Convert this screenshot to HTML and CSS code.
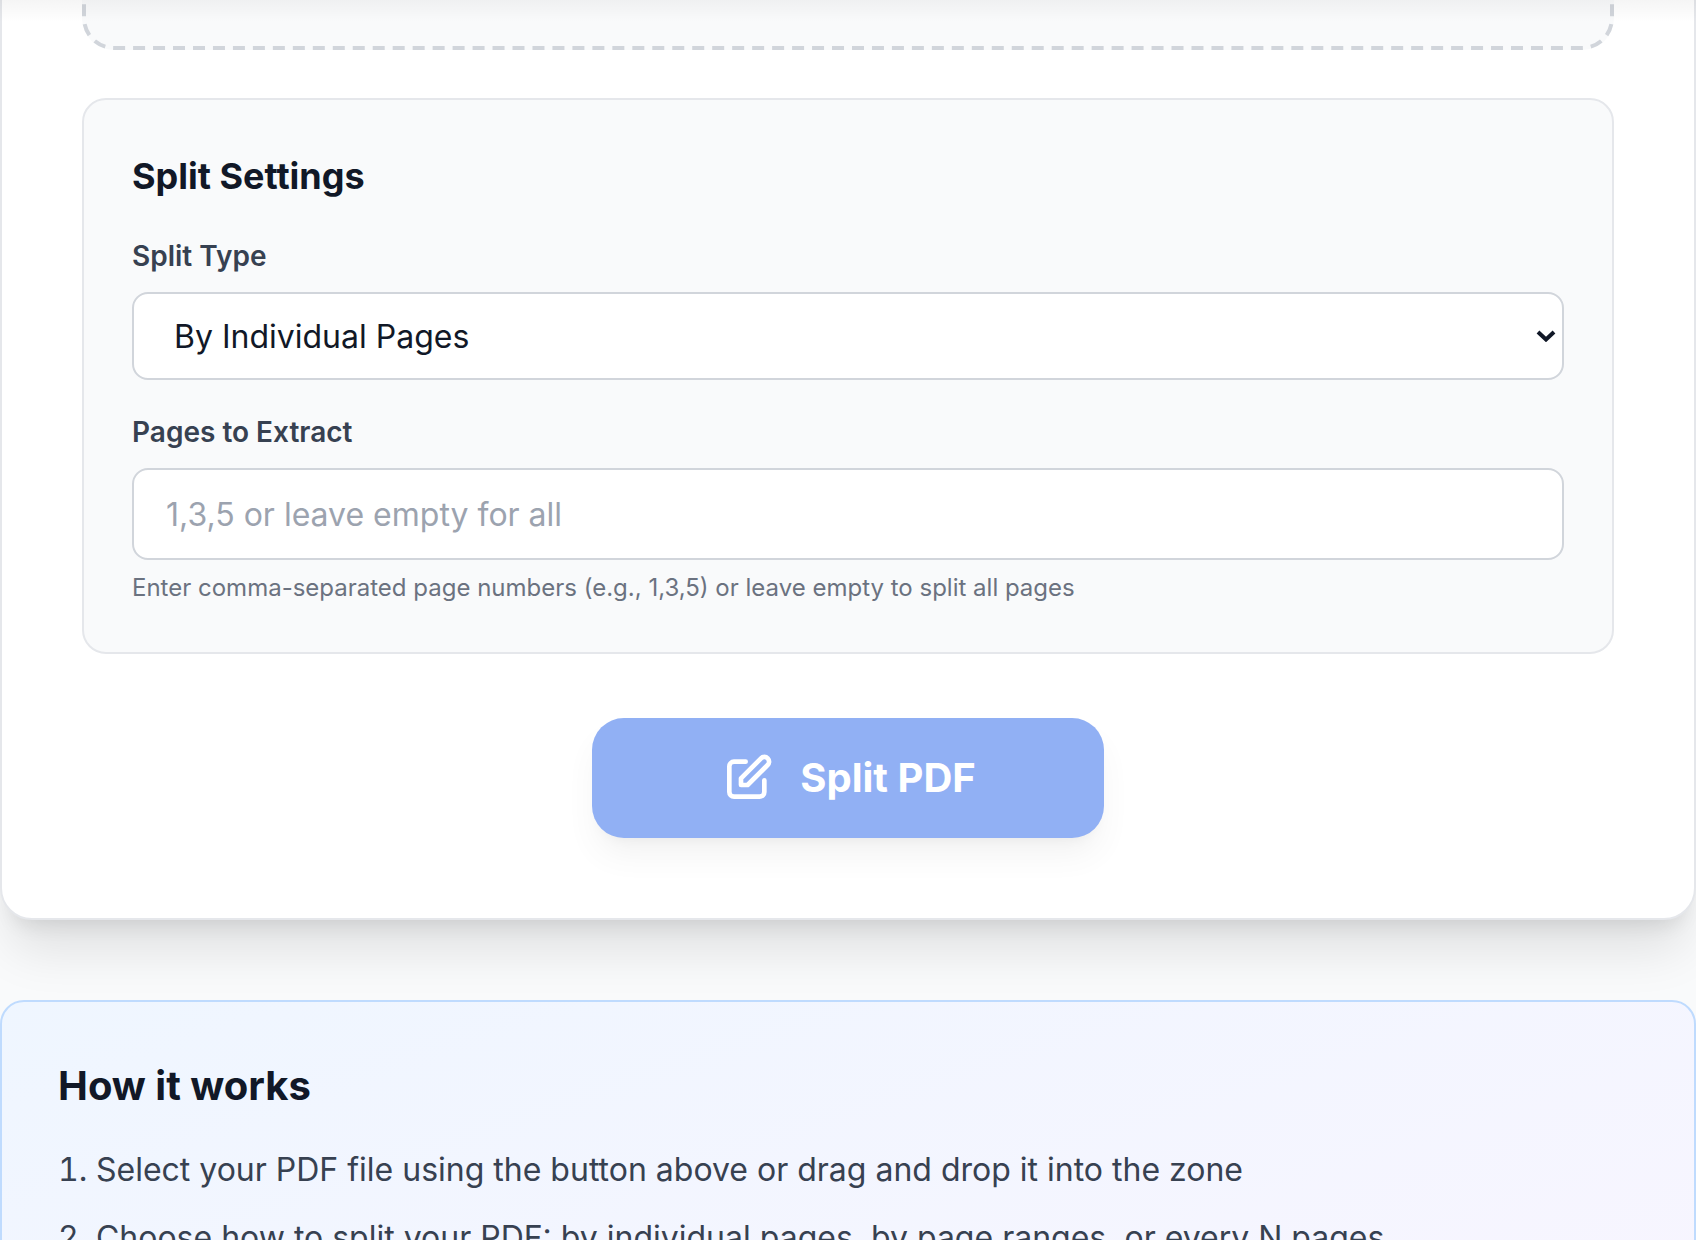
FILE: index.html
```html
<!DOCTYPE html>
<html lang="en">
<head>
    <meta charset="UTF-8">
    <meta name="viewport" content="width=device-width, initial-scale=1.0">
    <title>Split PDF</title>
    <link rel="stylesheet" href="styles.css">
</head>
<body>
    <main class="page">
        <section class="card">
            <div class="dropzone">
                <svg class="dropzone-outline" aria-hidden="true">
                    <rect x="2" y="2" rx="30" ry="30"/>
                </svg>
            </div>

            <form class="settings" id="split-form">
                <h3 class="settings-title">Split Settings</h3>

                <div class="field">
                    <label for="split-type">Split Type</label>
                    <div class="select-wrap">
                        <select id="split-type">
                            <option>By Individual Pages</option>
                        </select>
                        <svg class="select-arrow" viewBox="0 0 20 12" aria-hidden="true">
                            <path d="M2 2l8 7.500l8-7.500" fill="none" stroke="currentColor" stroke-width="4"/>
                        </svg>
                    </div>
                </div>

                <div class="field">
                    <label for="pages">Pages to Extract</label>
                    <input type="text" id="pages" placeholder="1,3,5 or leave empty for all">
                    <p class="hint">Enter comma-separated page numbers (e.g., 1,3,5) or leave empty to split all pages</p>
                </div>
            </form>

            <div class="actions">
                <button class="split-button" type="submit" form="split-form" disabled>
                    <svg class="split-icon" viewBox="0 0 24 24" fill="none" stroke="currentColor" stroke-width="2" stroke-linecap="round" stroke-linejoin="round" aria-hidden="true">
                        <path d="M11 5H6a2 2 0 00-2 2v11a2 2 0 002 2h11a2 2 0 002-2v-5m-1.414-9.414a2 2 0 112.828 2.828L11.828 15H9v-2.828l8.586-8.586z"/>
                    </svg>
                    <span>Split PDF</span>
                </button>
            </div>
        </section>

        <section class="how">
            <h2 class="how-title">How it works</h2>
            <ol class="steps">
                <li>Select your PDF file using the button above or drag and drop it into the zone</li>
                <li>Choose how to split your PDF: by individual pages, by page ranges, or every N pages</li>
            </ol>
        </section>
    </main>
</body>
</html>
```

FILE: styles.css
```css
* {
    box-sizing: border-box;
    margin: 0;
    padding: 0;
}

body {
    font-family: Inter, sans-serif;
    font-size: 32px;
    color: #111827;
    background-color: #f9fafb;
    height: 100vh;
    overflow: hidden;
}

.page::before {
    content: "";
    position: absolute;
    z-index: 1;
    top: 0;
    left: 0;
    right: 0;
    height: 22px;
    background: linear-gradient(rgba(0, 0, 0, 0.04), rgba(0, 0, 0, 0));
}

.page {
    display: flex;
    flex-direction: column;
    gap: 80px;
}

/* Main card, its top is scrolled out of view */
.card {
    margin-top: -412px;
    background-color: #fff;
    border: 2px solid #e5e7eb;
    border-radius: 32px;
    padding: 80px;
    box-shadow: 0 40px 50px -10px rgba(0, 0, 0, 0.1), 0 16px 20px -12px rgba(0, 0, 0, 0.1);
}

.dropzone {
    position: relative;
    height: 380px;
    background-color: #f9fafb;
    border-radius: 32px;
}

/* Dashed outline, drawn as a stroke to get long dashes */
.dropzone-outline {
    position: absolute;
    inset: 0;
    width: 100%;
    height: 100%;
}

.dropzone-outline rect {
    width: calc(100% - 4px);
    height: calc(100% - 4px);
    fill: none;
    stroke: #d1d5db;
    stroke-width: 4;
    stroke-dasharray: 12 7.97;
}

/* Settings panel */
.settings {
    display: flex;
    flex-direction: column;
    gap: 32px;
    margin-top: 48px;
    padding: 48px;
    background-color: #f9fafb;
    border: 2px solid #e5e7eb;
    border-radius: 24px;
}

.settings-title {
    font-size: 36px;
    line-height: 56px;
    font-weight: 700;
}

.field label {
    display: block;
    margin-bottom: 16px;
    font-size: 28px;
    line-height: 40px;
    font-weight: 600;
    color: #374151;
}

.select-wrap {
    position: relative;
}

.field select,
.field input {
    display: block;
    width: 100%;
    font-family: inherit;
    font-size: 32px;
    color: #111827;
    background-color: #fff;
    border: 2px solid #d1d5db;
    border-radius: 16px;
}

.field select {
    height: 88px;
    padding: 0 40px;
    appearance: none;
}

.field input {
    height: 92px;
    padding: 0 32px;
}

.field input::placeholder {
    color: #9ca3af;
}

.select-arrow {
    position: absolute;
    top: 50%;
    right: 8px;
    width: 20px;
    height: 12px;
    margin-top: -6px;
    pointer-events: none;
}

.hint {
    margin-top: 12px;
    font-size: 24px;
    line-height: 32px;
    color: #6b7280;
}

/* Submit button */
.actions {
    display: flex;
    justify-content: center;
    margin-top: 64px;
}

.split-button {
    display: flex;
    align-items: center;
    gap: 24px;
    padding: 32px 128px;
    font-family: inherit;
    font-size: 40px;
    line-height: 56px;
    font-weight: 700;
    color: #fff;
    background-color: #2563eb;
    border: none;
    border-radius: 32px;
    box-shadow: 0 20px 30px -6px rgba(0, 0, 0, 0.1), 0 8px 12px -8px rgba(0, 0, 0, 0.1);
}

.split-button:disabled {
    opacity: 0.5;
}

.split-icon {
    width: 56px;
    height: 56px;
}

/* How it works */
.how {
    min-height: 596px;
    padding: 56px;
    background: linear-gradient(to bottom right, #eff6ff, #faf5ff);
    border: 2px solid #bfdbfe;
    border-radius: 24px;
}

.how-title {
    margin-bottom: 30px;
    font-size: 40px;
    line-height: 56px;
    font-weight: 700;
}

.steps {
    list-style-position: inside;
    color: #374151;
    line-height: 52px;
}

.steps li + li {
    margin-top: 16px;
}
```
